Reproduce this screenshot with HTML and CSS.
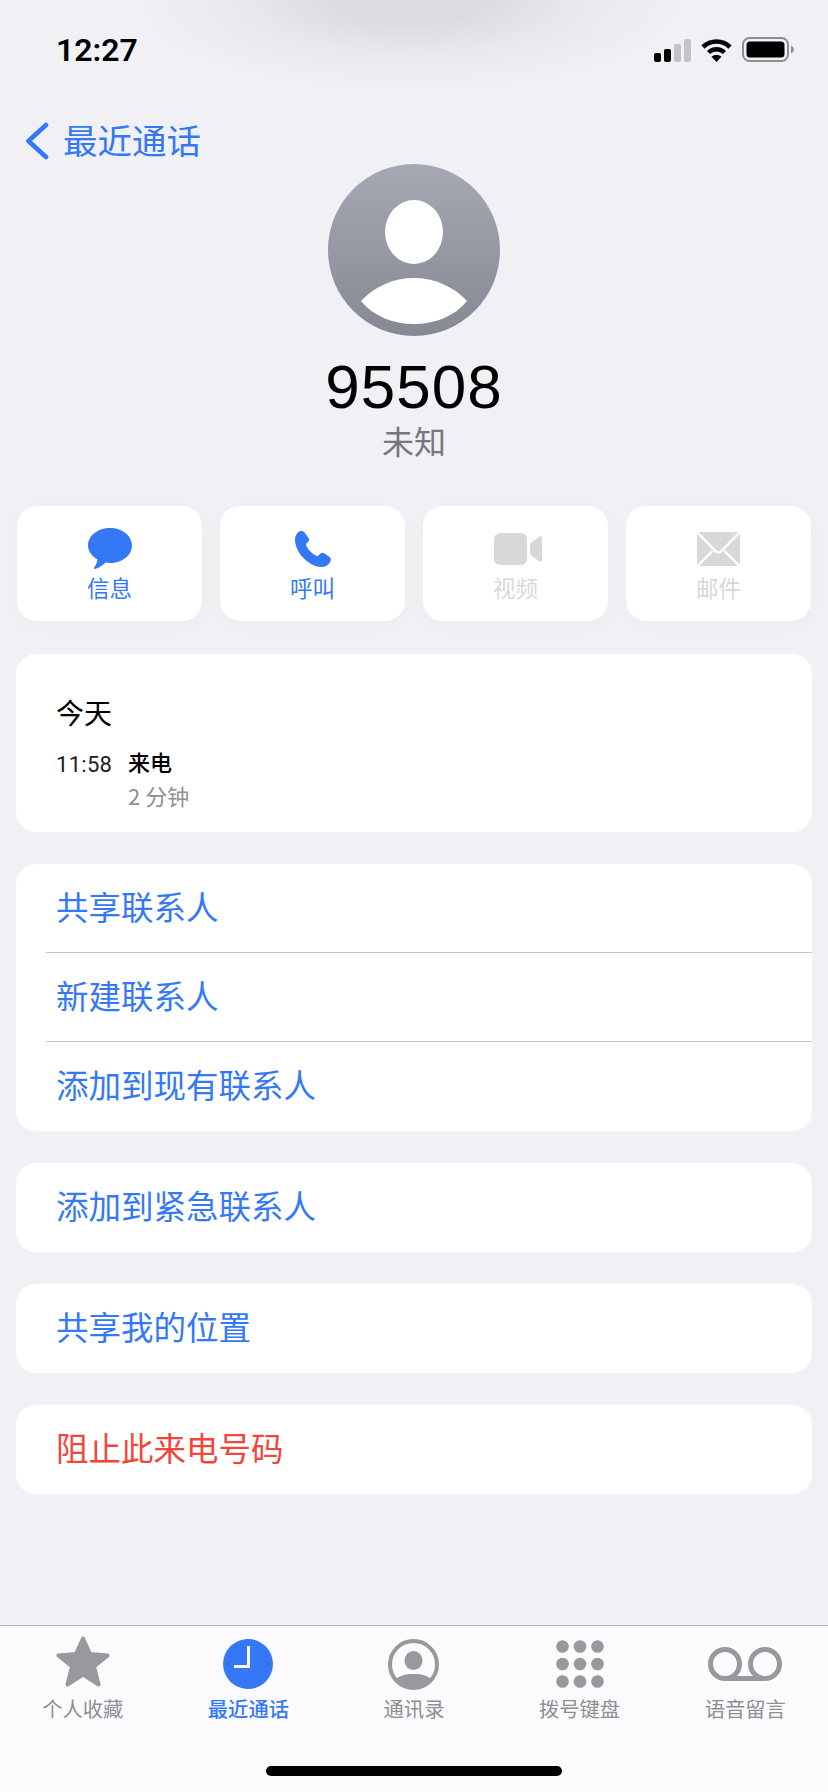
FILE: index.html
```html
<!DOCTYPE html>
<html lang="zh-CN">
<head>
    <meta charset="UTF-8">
    <title>95508</title>
    <link rel="stylesheet" href="styles.css">
</head>
<body>

<div class="screen">
    <div class="top-shade"></div>

    <div class="status">
        <span class="time">12:27</span>
        <div class="status-icons">
            <svg width="37" height="23" viewBox="0 0 37 23">
                <rect x="0" y="14" width="7" height="9" rx="2" fill="#000"/>
                <rect x="10" y="10" width="7" height="13" rx="2" fill="#000"/>
                <rect x="20" y="5" width="7" height="18" rx="2" fill="#c4c4c8"/>
                <rect x="30" y="0" width="7" height="23" rx="2" fill="#c4c4c8"/>
            </svg>
            <svg width="31" height="24" viewBox="0 0 31 24">
                <path d="M2 9 A19.5 19.5 0 0 1 29 9" fill="none" stroke="#000" stroke-width="4.6"/>
                <path d="M7.5 14.5 A11.5 11.5 0 0 1 23.5 14.5" fill="none" stroke="#000" stroke-width="4.4"/>
                <path d="M15.5 24 L10.5 18.8 A7.4 7.4 0 0 1 20.5 18.8 Z" fill="#000"/>
            </svg>
            <svg width="52" height="25" viewBox="0 0 52 25">
                <rect x="1" y="1" width="45" height="23" rx="6.5" fill="none" stroke="#8e8e92" stroke-width="2"/>
                <rect x="4.5" y="4.5" width="38" height="16" rx="3.5" fill="#000"/>
                <path d="M49 8.5 Q52 10 52 12.5 Q52 15 49 16.5 Z" fill="#8e8e92"/>
            </svg>
        </div>
    </div>

    <a class="back">
        <svg width="24" height="38" viewBox="0 0 24 38">
            <path d="M21 3 L3.500 19 L21 35" fill="none" stroke="#3478f6" stroke-width="4.6" stroke-linecap="round" stroke-linejoin="round"/>
        </svg>
        <span>最近通话</span>
    </a>

    <div class="head">
        <div class="avatar">
            <svg width="172" height="172" viewBox="0 0 172 172">
                <ellipse cx="86" cy="68" rx="29" ry="32" fill="#fff"/>
                <path d="M33 137 C47 122 66 114 86 114 C106 114 125 122 139 137 C127 152 107 160 86 160 C65 160 45 152 33 137 Z" fill="#fff"/>
            </svg>
        </div>
        <div class="number">95508</div>
        <div class="unknown">未知</div>
    </div>

    <div class="actions">
        <div class="action">
            <svg width="44" height="41" viewBox="0 0 44 41">
                <path d="M22 0 C34 0 44 7.500 44 17.500 C44 27.500 34 35 22 35 C20.500 35 19 34.900 17.500 34.600 C14.500 37.800 10.500 40 7 41 C6 41 5.500 40 6.200 39.300 C8 37.500 9.200 34.500 9.400 31.300 C3.700 28.200 0 23.200 0 17.500 C0 7.500 10 0 22 0 Z" fill="#3478f6"/>
            </svg>
            <span>信息</span>
        </div>
        <div class="action">
            <svg class="phone" width="36" height="36" viewBox="0 0 36 36">
                <path d="M3 1.500 C5 -0.500 8 -0.500 9.500 1.500 L13.500 7 C14.500 8.500 14.200 10 13 11 L11 12.700 C11 15 13 18.500 16 21 C18.500 23.700 21 25 23 25 L25 23 C26.300 21.700 28 21.500 29.500 22.500 L34.500 26 C36.300 27.500 36.300 30 34.500 32 C32 35 29.500 36 26.500 36 C19 36 12.500 31 8 26.500 C3.500 22 0 15 0 8.500 C0 5.500 1 3.500 3 1.500 Z" fill="#3478f6"/>
            </svg>
            <span>呼叫</span>
        </div>
        <div class="action off">
            <svg class="video" width="48" height="32" viewBox="0 0 48 32">
                <rect x="0" y="0" width="33" height="32" rx="6" fill="#d8d8d8"/>
                <path d="M36 12 Q36 10 38 9 L45.500 3.500 Q48 2.500 48 5 V27 Q48 29.500 45.500 28.500 L38 23 Q36 22 36 20 Z" fill="#d8d8d8"/>
            </svg>
            <span>视频</span>
        </div>
        <div class="action off">
            <svg class="mail" width="43" height="34" viewBox="0 0 43 34">
                <rect x="0" y="0" width="43" height="34" rx="1.500" fill="#d8d8d8"/>
                <path d="M0 0 L18.500 19 Q21.500 22 24.500 19 L43 0" fill="none" stroke="#fff" stroke-width="2.400"/>
                <path d="M0.500 34 L15.500 19 M42.500 34 L27.500 19" fill="none" stroke="#fff" stroke-width="2.400"/>
            </svg>
            <span>邮件</span>
        </div>
    </div>

    <div class="card calls">
        <div class="calls-day">今天</div>
        <div class="calls-row">
            <span class="calls-time">11:58</span>
            <div>
                <div class="calls-type">来电</div>
                <div class="calls-length">2 分钟</div>
            </div>
        </div>
    </div>

    <div class="card">
        <div class="row">共享联系人</div>
        <div class="row">新建联系人</div>
        <div class="row">添加到现有联系人</div>
    </div>
    <div class="card">
        <div class="row">添加到紧急联系人</div>
    </div>
    <div class="card">
        <div class="row">共享我的位置</div>
    </div>
    <div class="card">
        <div class="row red">阻止此来电号码</div>
    </div>

    <div class="tabbar">
        <div class="tab">
            <div class="tab-icon">
                <svg class="star" width="54" height="51" viewBox="0 0 54 51">
                    <path d="M27 2.500 L34 18 L51.500 19.500 L38 30.500 L42.500 48.500 L27 38.500 L11.500 48.500 L16 30.500 L2.500 19.500 L20 18 Z" fill="#98989d" stroke="#98989d" stroke-width="4" stroke-linejoin="round"/>
                </svg>
            </div>
            <span>个人收藏</span>
        </div>
        <div class="tab active">
            <div class="tab-icon">
                <svg width="50" height="50" viewBox="0 0 50 50">
                    <circle cx="25" cy="25" r="25" fill="#3478f6"/>
                    <path d="M24 7 H27 V29 H11 V26 H24 Z" fill="#fff"/>
                </svg>
            </div>
            <span>最近通话</span>
        </div>
        <div class="tab">
            <div class="tab-icon">
                <svg width="51" height="51" viewBox="0 0 51 51">
                    <circle cx="25.500" cy="25.500" r="23.500" fill="none" stroke="#98989d" stroke-width="4"/>
                    <ellipse cx="25.500" cy="21.500" rx="9" ry="9.500" fill="#98989d"/>
                    <path d="M7 41 C12 36 18 35 25.500 35 C33 35 39 36 44 41 C39 46 32 50 25.500 50 C19 50 12 46 7 41 Z" fill="#98989d"/>
                </svg>
            </div>
            <span>通讯录</span>
        </div>
        <div class="tab">
            <div class="tab-icon">
                <svg width="48" height="48" viewBox="0 0 48 48">
                    <circle cx="6.500" cy="6.500" r="6.300" fill="#98989d"/>
                    <circle cx="24" cy="6.500" r="6.300" fill="#98989d"/>
                    <circle cx="41.500" cy="6.500" r="6.300" fill="#98989d"/>
                    <circle cx="6.500" cy="24" r="6.300" fill="#98989d"/>
                    <circle cx="24" cy="24" r="6.300" fill="#98989d"/>
                    <circle cx="41.500" cy="24" r="6.300" fill="#98989d"/>
                    <circle cx="6.500" cy="41.500" r="6.300" fill="#98989d"/>
                    <circle cx="24" cy="41.500" r="6.300" fill="#98989d"/>
                    <circle cx="41.500" cy="41.500" r="6.300" fill="#98989d"/>
                </svg>
            </div>
            <span>拨号键盘</span>
        </div>
        <div class="tab">
            <div class="tab-icon">
                <svg width="74" height="34" viewBox="0 0 74 34">
                    <circle cx="17" cy="17" r="14.500" fill="none" stroke="#98989d" stroke-width="5"/>
                    <circle cx="57" cy="17" r="14.500" fill="none" stroke="#98989d" stroke-width="5"/>
                    <rect x="17" y="29" width="40" height="5" fill="#98989d"/>
                </svg>
            </div>
            <span>语音留言</span>
        </div>
        <div class="home-bar"></div>
    </div>
</div>

</body>
</html>
```

FILE: styles.css
```css
body {
    margin: 0;
    background-color: #f0f0f5;
    font-family: "Noto Sans CJK SC", sans-serif;
}
.screen {
    position: relative;
    display: flex;
    flex-direction: column;
    height: 1792px;
    overflow: hidden;
}
.top-shade {
    position: absolute;
    left: 130px;
    top: -90px;
    width: 560px;
    height: 180px;
    border-radius: 50%;
    background: radial-gradient(closest-side, #dcdce0 25%, rgba(220, 220, 224, 0.4) 60%, rgba(220, 220, 224, 0));
}

.status {
    position: relative;
    display: flex;
    justify-content: space-between;
    height: 118px;
    padding: 30px 34px 0 56px;
    box-sizing: border-box;
}
.time {
    font-family: Roboto, sans-serif;
    font-size: 32px;
    font-weight: 600;
    line-height: 40px;
    color: #000;
}
.status-icons {
    display: flex;
    align-items: flex-end;
    gap: 10px;
    height: 32px;
}

.back {
    display: flex;
    align-items: center;
    gap: 14px;
    height: 46px;
    padding-left: 25px;
    color: #3478f6;
    font-size: 34.500px;
    line-height: 38px;
}
.back span {
    margin-bottom: 5px;
}

.head {
    display: flex;
    flex-direction: column;
    align-items: center;
}
.avatar {
    width: 172px;
    height: 172px;
    border-radius: 50%;
    background: linear-gradient(#a6a9b4, #858993);
}
.avatar svg {
    display: block;
}
.number {
    margin-top: 19px;
    font-family: "Liberation Sans", sans-serif;
    font-size: 62px;
    letter-spacing: 1px;
    line-height: 64px;
    color: #000;
}
.unknown {
    font-size: 32px;
    line-height: 42px;
    color: #77777b;
}

.actions {
    display: grid;
    grid-template-columns: repeat(4, 185px);
    gap: 18px;
    margin: 45px 17px 0;
}
.action {
    display: flex;
    flex-direction: column;
    align-items: center;
    justify-content: flex-end;
    height: 115px;
    padding-bottom: 18px;
    box-sizing: border-box;
    border-radius: 20px;
    background-color: #fff;
    box-shadow: 0 4px 18px rgba(0, 0, 0, 0.025);
    color: #3478f6;
    font-size: 22.500px;
    line-height: 32px;
}
.action svg {
    margin-bottom: 2px;
}
.action .phone {
    margin-bottom: 4px;
}
.action .video {
    margin-bottom: 6px;
    margin-left: 5px;
}
.action .mail {
    margin-bottom: 5px;
}
.action.off {
    color: #d8d8d8;
}

.card {
    margin: 32px 16px 0;
    border-radius: 20px;
    background-color: #fff;
}
.calls {
    height: 178px;
    margin-top: 33px;
    padding: 38px 40px 0;
    box-sizing: border-box;
}
.calls-day {
    font-size: 28px;
    line-height: 40px;
    color: #000;
}
.calls-row {
    display: flex;
    gap: 17px;
    margin-top: 13px;
}
.calls-time {
    width: 55px;
    padding-top: 3px;
    font-family: Roboto, sans-serif;
    font-size: 22px;
    letter-spacing: 0.300px;
    line-height: 34px;
    color: #1c1c1e;
}
.calls-type {
    font-size: 22px;
    font-weight: 500;
    line-height: 33px;
    color: #000;
}
.calls-length {
    font-size: 22px;
    line-height: 34px;
    color: #8e8e93;
}

.row {
    position: relative;
    height: 89px;
    padding-left: 40px;
    font-size: 32.500px;
    line-height: 84px;
    color: #3478f6;
}
.row + .row::before {
    content: "";
    position: absolute;
    left: 30px;
    right: 0;
    top: -1px;
    height: 1px;
    background-color: #c6c6c8;
}
.red {
    color: #f2463b;
}

.tabbar {
    position: relative;
    display: grid;
    grid-template-columns: repeat(5, 1fr);
    height: 167px;
    margin-top: auto;
    border-top: 1px solid #b2b2b4;
    box-sizing: border-box;
    padding-top: 10px;
    background-color: #fbfbfd;
}
.tab {
    display: flex;
    flex-direction: column;
    align-items: center;
    color: #8e8e93;
    font-size: 20.300px;
    line-height: 30px;
}
.tab-icon {
    display: flex;
    align-items: center;
    height: 56px;
    margin-bottom: 1px;
}
.star {
    margin-top: -5px;
}
.tab.active {
    color: #3478f6;
    font-weight: 500;
}
.home-bar {
    position: absolute;
    left: 266px;
    bottom: 16px;
    width: 296px;
    height: 10px;
    border-radius: 5px;
    background-color: #000;
}
```
